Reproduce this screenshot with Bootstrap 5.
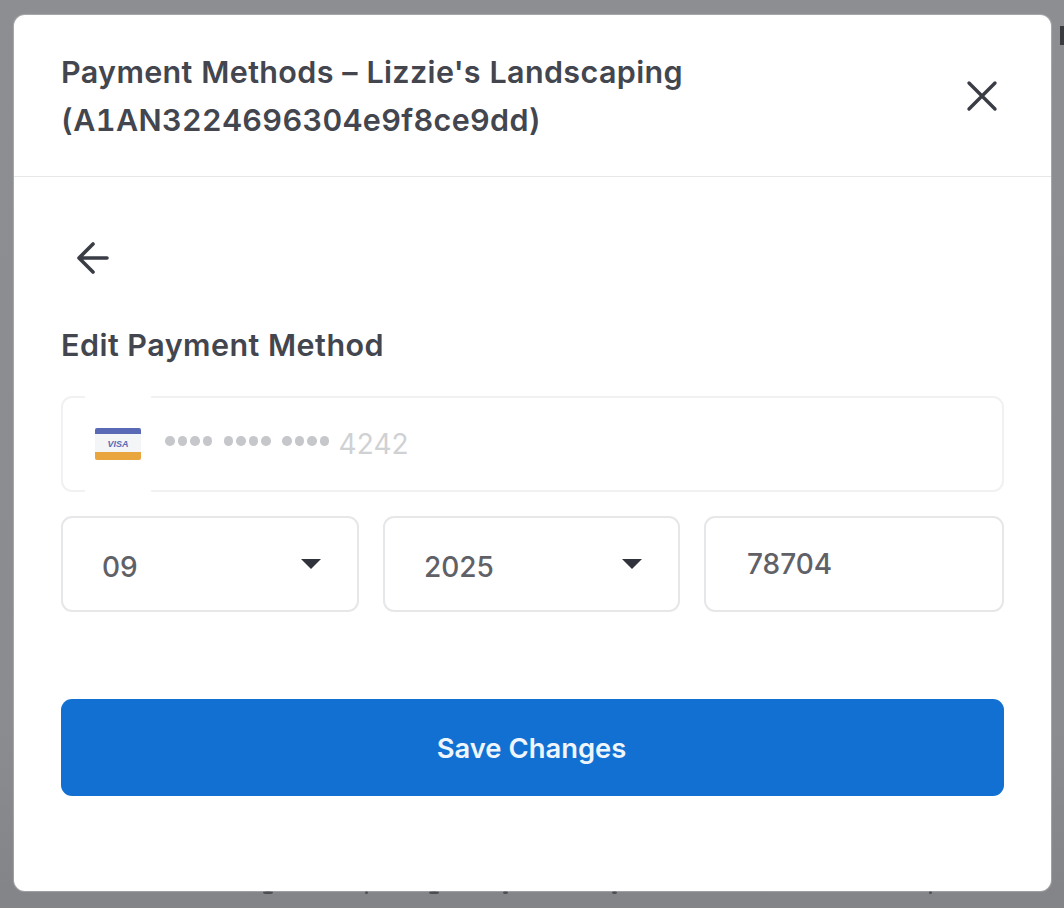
<!DOCTYPE html>
<html lang="en">
<head>
<meta charset="utf-8">
<title>Payment Methods</title>
<link href="https://cdn.jsdelivr.net/npm/bootstrap@5.3.0/dist/css/bootstrap.min.css" rel="stylesheet">
<style>
html,body{height:100%}
body{background:linear-gradient(#8d8e92,#8b8c90 80%,#838488);font-family:Inter,"Noto Sans",sans-serif;color:#3a3d45;overflow:hidden;padding:15px 13px 17px 14px;position:relative}
.pm-dialog{height:876px;border:0;border-radius:11px;background:#fff;color:#3a3d45;overflow:hidden;position:relative;box-shadow:0 0 1px 1px rgba(255,255,255,.25)}
.pm-head{padding:33px 47px 32px 47px;border-bottom:1px solid #e6e7e9;align-items:center}
.pm-title{font-size:30.5px;line-height:48px;font-weight:600;margin:0;color:#43464e;letter-spacing:.35px;font-variant-numeric:tabular-nums}
.pm-close{background:none;border:0;padding:0;width:36px;height:36px;margin-right:4px;color:#3a3d45}
.pm-body{padding:59px 47px 0 47px}
.pm-back{background:none;border:0;padding:0;width:44px;height:44px;margin-left:10px;color:#3a3d45;display:block}
.pm-sub{font-size:30.5px;line-height:40px;font-weight:600;color:#43464e;margin:45px 0 31px;letter-spacing:.47px}
.pm-card{height:96px;border:2px solid #f1f1f3;border-radius:11px;position:relative;font-size:28px;color:#d0d1d3}
.pm-cover{position:absolute;left:22px;top:-2px;bottom:-2px;width:66px;background:#fff;display:flex;align-items:center;justify-content:center}
.pm-dots{margin-left:102px}
.pm-dotset{display:inline-flex;gap:3px;margin-right:11.5px;transform:translateY(-3px)}
.pm-dotset i{display:block;width:9.5px;height:9.5px;border-radius:50%;background:#c6c7ca}
.pm-num{letter-spacing:.1px;margin-left:-2px}
.pm-row{display:grid;grid-template-columns:298px 297px 300px;gap:24px;margin-top:24px}
.pm-field{height:96px;border:2px solid #e6e7e9;border-radius:11px;font-size:28px;font-weight:500;color:#5f6167;padding:0 39px;background:#fff}
.pm-zip{padding-left:41px}
.pm-text-low{transform:translateY(3px)}
.pm-caret{width:0;height:0;border-left:10px solid transparent;border-right:10px solid transparent;border-top:10px solid #30333b;margin-right:-2px;transform:translateX(1px)}
.pm-save{height:97px;margin-top:87px;background:#1170d1;border:0;border-radius:11px;font-size:27.4px;font-weight:600;color:#eef5fc;width:100%;padding:2px 14px 0 12px}
.pm-save:hover{background:#1170d1;color:#eef5fc}
.pm-speck{position:absolute;top:891px;height:3px;border-radius:50%;background:#4a4b50}
.pm-edge{position:absolute;top:26px;left:1060px;width:4px;height:19px;background:#3a3b40}
</style>
</head>
<body>
<span class="pm-edge"></span>
<span class="pm-speck" style="left:263px;width:10px"></span>
<span class="pm-speck" style="left:365px;width:3px"></span>
<span class="pm-speck" style="left:429px;width:10px"></span>
<span class="pm-speck" style="left:503px;width:5px"></span>
<span class="pm-speck" style="left:612px;width:5px"></span>
<span class="pm-speck" style="left:929px;width:3px"></span>
<div class="modal-content pm-dialog">
  <div class="d-flex justify-content-between pm-head">
    <h5 class="pm-title">Payment Methods – Lizzie's Landscaping<br>(A1AN3224696304e9f8ce9dd)</h5>
    <button class="pm-close" type="button" aria-label="Close">
      <svg width="36" height="36" viewBox="0 0 36 36" fill="none" stroke="currentColor" stroke-width="3.4" stroke-linecap="round"><path d="M5 5 31 31M31 5 5 31"/></svg>
    </button>
  </div>
  <div class="pm-body">
    <button class="pm-back" type="button" aria-label="Back">
      <svg width="44" height="44" viewBox="0 0 44 44" fill="none" stroke="currentColor" stroke-width="3.6" stroke-linecap="round" stroke-linejoin="round"><path d="M8 22H36M22 8 8 22 22 36"/></svg>
    </button>
    <h6 class="pm-sub">Edit Payment Method</h6>
    <div class="pm-card d-flex align-items-center">
      <div class="pm-cover">
        <svg width="48" height="34" viewBox="0 0 48 34"><rect x="1" y="1" width="46" height="32" rx="2" fill="#f4f5f6"/><path d="M1 7V3a2 2 0 0 1 2-2h42a2 2 0 0 1 2 2v4z" fill="#5a69b6"/><path d="M1 25h46v6a2 2 0 0 1-2 2H3a2 2 0 0 1-2-2z" fill="#e9a63f"/><text x="24" y="20" text-anchor="middle" font-family="Liberation Sans" font-size="9" font-style="italic" font-weight="700" fill="#5a69b6">VISA</text></svg>
      </div>
      <div class="pm-dots d-flex align-items-center">
        <span class="pm-dotset"><i></i><i></i><i></i><i></i></span>
        <span class="pm-dotset"><i></i><i></i><i></i><i></i></span>
        <span class="pm-dotset"><i></i><i></i><i></i><i></i></span>
        <span class="pm-num">4242</span>
      </div>
    </div>
    <div class="pm-row">
      <div class="pm-field d-flex align-items-center justify-content-between"><span class="pm-text-low">09</span><span class="pm-caret"></span></div>
      <div class="pm-field d-flex align-items-center justify-content-between"><span class="pm-text-low">2025</span><span class="pm-caret"></span></div>
      <div class="pm-field pm-zip d-flex align-items-center">78704</div>
    </div>
    <button class="btn pm-save" type="button">Save Changes</button>
  </div>
</div>
<script src="https://cdn.jsdelivr.net/npm/bootstrap@5.3.0/dist/js/bootstrap.bundle.min.js"></script>
</body>
</html>
